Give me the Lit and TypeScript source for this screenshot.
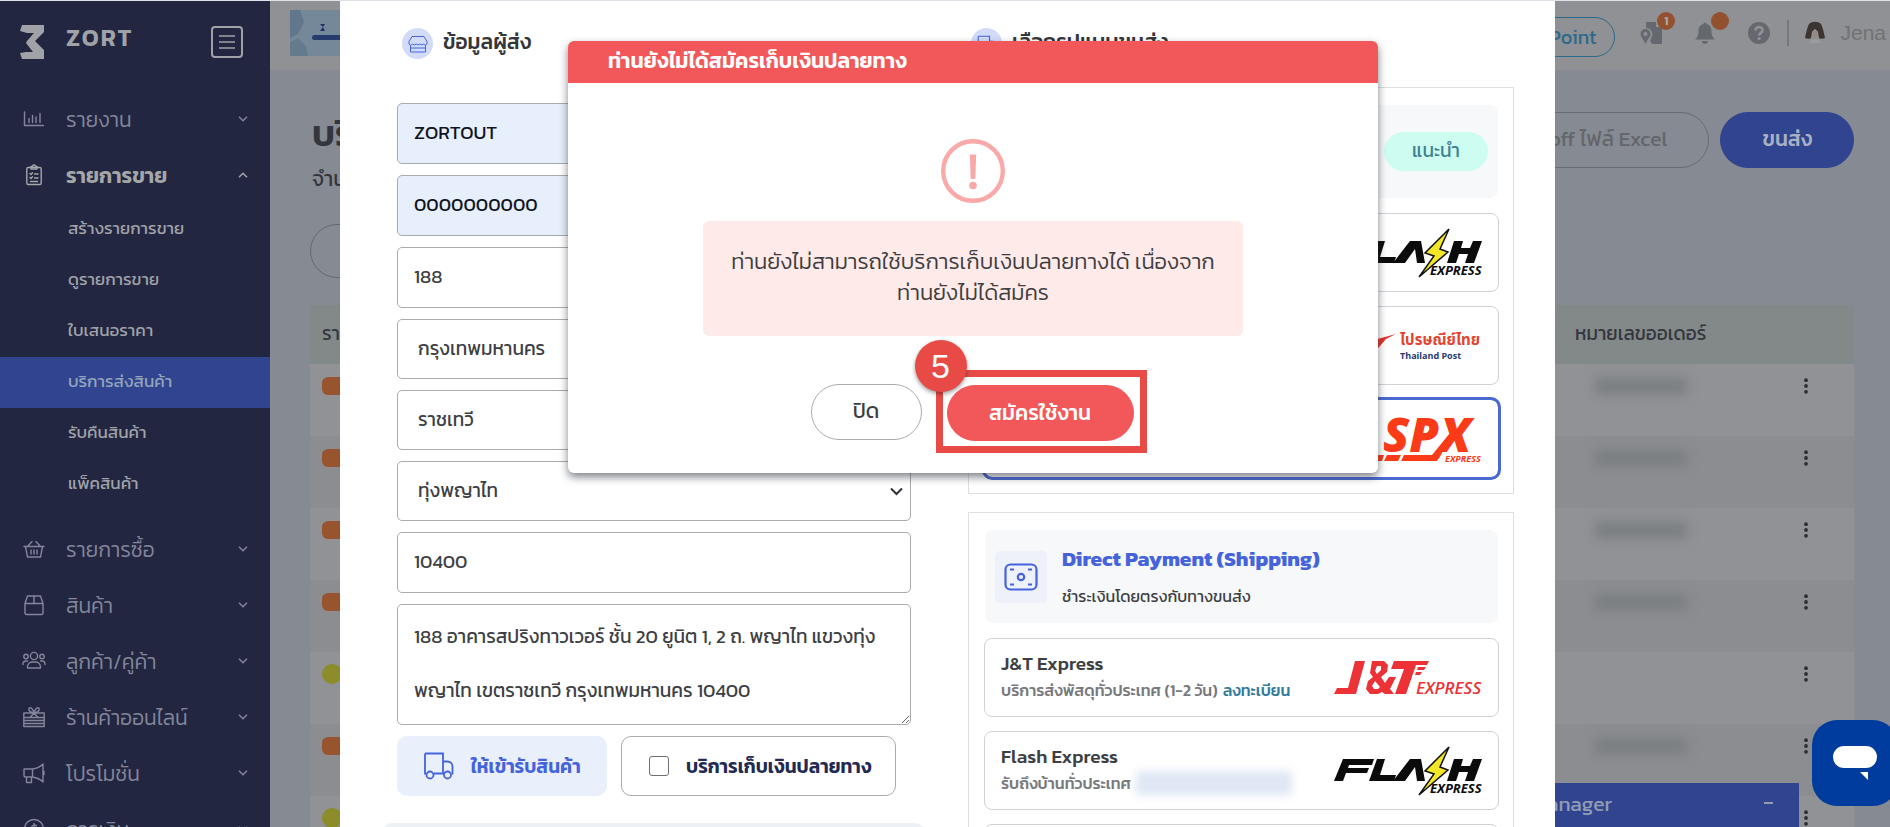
import { LitElement, html, css, svg, nothing } from "lit";
import { customElement } from "lit/decorators.js";
import { classMap } from "lit/directives/class-map.js";

const chevron = (up = false) => svg`<svg class="chev" width="10" height="6" viewBox="0 0 10 6" fill="none" stroke="currentColor" stroke-width="1.5"><path d=${up ? "M1 5.2 5 1.2 9 5.2" : "M1 .8 5 4.8 9 .8"} /></svg>`;

const stroke = (body: unknown) => html`<svg class="ico" width="24" height="24" viewBox="0 0 24 24" fill="none" stroke="currentColor" stroke-width="1.4" stroke-linecap="round" stroke-linejoin="round">${body}</svg>`;

const icons: Record<string, unknown> = {
  report: svg`<path d="M2.500 5v13.500H21.500M7 15.500v-4M10.500 15.500V8.500M14 15.500v-5.500M18 15.500V6.500" />`,
  orders: svg`<rect x="4.800" y="4.500" width="14.400" height="17" rx="1.500"/><path d="M9 4.500V3.500h1.500a1.500 1.500 0 0 1 3 0H15v2.500H9zM8 10.500l1 1 1.500-1.800M12.500 11H16M8 14.500l1 1 1.500-1.800M12.500 15H16M8.500 18.500h7" />`,
  buy: svg`<path d="M2 9.500h20M3.500 9.500l2 10.500h13l2-10.500M10 4.500 5.500 9.500M14 4.500l4.500 5M9 13v4M12 13v4M15 13v4" />`,
  product: svg`<path d="M3 10.500 5.500 3h13L21 10.500v9.500a1.500 1.500 0 0 1-1.500 1.500h-15A1.500 1.500 0 0 1 3 20zM3 10.500h18M12 3v7.500" />`,
  people: svg`<circle cx="12" cy="7" r="3.600"/><circle cx="4" cy="7.500" r="2.200"/><circle cx="20" cy="7.500" r="2.200"/><path d="M5.500 19v-1.500a5 5 0 0 1 5-4.500h3a5 5 0 0 1 5 4.500V19zM1 15.500v-1a3 3 0 0 1 3-2.500h1.500M23 15.500v-1a3 3 0 0 0-3-2.500h-1.500" />`,
  shop: svg`<path d="M1.800 8h20.400v13.500H1.800zM1.800 12.500h20.400M1.800 15.500h20.400M1.800 18.500h20.400M12 8C8 7 6 5.500 7 3.500s4 0 5 4.500c1-4.500 4-6.500 5-4.500S16 7 12 8zM12 8l-4 4.500M12 8l4 4.500" />`,
  promo: svg`<path d="M2 8h8.500v8H3.500A1.500 1.500 0 0 1 2 14.500zM10.500 8C14 7.500 18 6 21 3v18c-3-3-7-4.500-10.500-5M4.500 16v5.500H9.500V16M22 10.500v3" />`,
  money: svg`<circle cx="12" cy="12" r="9.500"/><path d="M14.500 9C14 7.800 10 7.500 9.800 9.700c0 2.500 5 1.600 5 4.400-.2 2.300-4.500 2.200-5.300.4M12 6.500v11" />`,
};

const menu = [
  { icon: "report", label: "รายงาน" },
  {
    icon: "orders", label: "รายการขาย",
    items: ["สร้างรายการขาย", "ดูรายการขาย", "ใบเสนอราคา", "บริการส่งสินค้า", "รับคืนสินค้า", "แพ็คสินค้า"],
  },
  { icon: "buy", label: "รายการซื้อ" },
  { icon: "product", label: "สินค้า" },
  { icon: "people", label: "ลูกค้า/คู่ค้า" },
  { icon: "shop", label: "ร้านค้าออนไลน์" },
  { icon: "promo", label: "โปรโมชั่น" },
  { icon: "money", label: "การเงิน" },
];

const FONT = css`"Kanit", "Prompt", "Noto Sans Thai", "Noto Sans", sans-serif`;

const base = css`
  * { box-sizing: border-box; }
  button, input, select, textarea { font: inherit; color: inherit; margin: 0; }
  button { cursor: pointer; }
  a { color: inherit; text-decoration: none; }
  svg { flex: none; display: block; overflow: visible; }
`;

@customElement("side-menu")
class SideMenu extends LitElement {
  static styles = [base, css`
    :host { display: block; background: #222641; color: #8b8e9b; }
    .brand { display: flex; height: 90px; padding: 22px 27px 0 18px; color: #a0a2a7; }
    .name { flex: 1; margin-left: 20px; font-size: 24px; line-height: 30px; font-weight: 600; letter-spacing: 2px; }
    .toggle { width: 32px; height: 32px; margin-top: 3px; padding: 0; border: 2px solid currentColor; border-radius: 4px; background: none; display: grid; place-items: center; }
    .group { display: flex; align-items: center; width: 100%; height: 56px; padding: 0 22px 0 22px; border: 0; background: none; font-size: 21px; font-weight: 300; color: #83869a; text-align: left; }
    .group span { flex: 1; margin-left: 20px; }
    .open { font-weight: 600; color: #a5a6a8; }
    .subs { list-style: none; margin: 1px 0 11px; padding: 0; }
    .sub { display: flex; align-items: center; height: 51px; padding: 0 0 4px 68px; font-size: 17px; color: #a0a2a8; }
    .current { background: #30448f; color: #93a4bc; }
  `];
  render() {
    return html`
      <div class="brand">
        <svg width="28" height="38" viewBox="0 0 28 38" fill="#a0a2a7"><path d="M4 2h22v7l-9 9 9 9v9H4l-2-6 6-1h7L8 20l1-2 7-8H9L2 8z"/></svg>
        <span class="name">ZORT</span>
        <button class="toggle" aria-label="เมนู"><svg width="18" height="14" viewBox="0 0 18 14" stroke="currentColor" stroke-width="1.600"><path d="M1 1h16M1 7h16M1 13h16"/></svg></button>
      </div>
      <nav>
        ${menu.map((g) => html`
          <button class=${classMap({ group: true, open: !!g.items })}>${stroke(icons[g.icon])}<span>${g.label}</span>${chevron(!!g.items)}</button>
          ${g.items ? html`<ul class="subs">${g.items.map((t, i) => html`<li><a href="#" class=${classMap({ sub: true, current: i === 3 })}>${t}</a></li>`)}</ul>` : nothing}
        `)}
      </nav>`;
  }
}

@customElement("orders-page")
class OrdersPage extends LitElement {
  static styles = [base, css`
    :host { display: block; background: #868a93; color: #33363c; overflow: hidden; }
    .top { display: flex; align-items: center; height: 70px; padding: 0 4px 6px 20px; background: #8f9194; border-bottom: 1px solid #86898f; color: #65696f; }
    .banner { width: 90px; height: 46px; margin-right: auto; }
    .point { height: 40px; padding: 0 18px; border: 1px solid #2c6a8b; border-radius: 20px; background: none; color: #2c6a8b; font-size: 20px; margin-top: 8px; margin-right: 24px; }
    .tool { position: relative; width: 24px; height: 24px; padding: 0; border: 0; background: none; margin-right: 30px; }
    .help { margin-right: 16px; }
    .count { position: absolute; left: 18px; top: -9px; width: 18px; height: 18px; border-radius: 50%; background: #93512f; color: #b0a8a4; font-size: 12px; line-height: 18px; font-weight: 600; }
    .user { display: flex; align-items: center; gap: 15px; padding-left: 16px; border-left: 2px solid #75787c; height: 26px; font: 21px/26px "Liberation Sans", Arial, sans-serif; color: #707276; }
    .title { display: flex; height: 153px; padding: 41px 36px 0 42px; }
    h1 { margin: 0; font-size: 36px; line-height: 42px; font-weight: 600; }
    .sum { margin: 10px 0 0; font-size: 21px; line-height: 30px; }
    .acts { margin-left: auto; display: flex; gap: 11px; }
    .pill { height: 56px; padding: 0 41px 3px; border-radius: 28px; border: 1px solid #686b70; background: none; color: #63666b; font-size: 21px; white-space: nowrap; }
    .solid { background: #30448f; border-color: #30448f; color: #a9b0c6; font-weight: 500; }
    .search { width: 400px; height: 54px; margin: 0 0 27px 40px; padding: 0 24px; border: 1px solid #65686d; border-radius: 27px; background: none; display: block; }
    .wrap { margin: 0 36px 0 40px; }
    table { width: 100%; border-collapse: collapse; }
    th { height: 59px; background: #838989; text-align: left; font-size: 19px; font-weight: 400; padding: 0 12px 3px; }
    td { height: 72px; padding: 0 12px 28px; background: #909295; }
    tr:nth-child(even) td { background: #8b8d90; }
    .num { width: 219px; }
    .more { width: 72px; }
    .carrier { width: 36px; height: 18px; border-radius: 6px; background: #98532f; }
    .yellow { width: 20px; height: 20px; border-radius: 50%; background: #8c8c2a; }
    .smudge { width: 92px; height: 16px; margin-left: 20px; background: #7a7e80; filter: blur(6px); }
    .dots { border: 0; padding: 0 10px; background: none; display: block; }
  `];
  render() {
    return html`
      <header class="top">
        <svg class="banner" viewBox="0 0 90 46"><rect width="90" height="46" fill="#74889a"/><path d="M0 0h10l4 12-6 12-8 4z" fill="#61778b"/><path d="M0 46V32l8-4 8 8 2 10z" fill="#647b8e"/><path d="M30 14h5l-2 3 2 4h-5l3-4z" fill="#22306a"/><rect x="22" y="25" width="60" height="5" rx="2.500" fill="#263c6e"/></svg>
        <button class="point">Point</button>
        <button class="tool" aria-label="ขนส่ง"><svg width="24" height="24" viewBox="0 0 24 24" fill="currentColor"><path d="M7 1h10v5h6v17H13l-2-3 2-5a6 6 0 0 0-6-8z"/><path fill-rule="evenodd" d="M6.500 8a5 5 0 0 1 5 5c0 3-3 5-5 10-2-5-5-7-5-10a5 5 0 0 1 5-5zm0 3a2 2 0 1 0 0 4 2 2 0 0 0 0-4z"/></svg><span class="count">1</span></button>
        <button class="tool" aria-label="แจ้งเตือน"><svg width="24" height="24" viewBox="0 0 24 24" fill="currentColor"><path d="M12 1.500c1 0 1.500.8 1.500 1.500 3.500.8 5 3.500 5 7 0 4 1 6.500 3.500 8.500H2c2.500-2 3.500-4.500 3.500-8.500 0-3.500 1.500-6.200 5-7 0-.7.5-1.500 1.500-1.500zM9 20h6c0 4-6 4-6 0z"/></svg><span class="count"></span></button>
        <button class="tool help" aria-label="ช่วยเหลือ"><svg width="24" height="24" viewBox="0 0 24 24"><circle cx="12" cy="12" r="11" fill="currentColor"/><path d="M8.500 9.500c0-5 7.500-4.500 7 0-.3 2.500-3.300 2.300-3.300 5" fill="none" stroke="#8f9194" stroke-width="2.600"/><circle cx="12.200" cy="17.500" r="1.600" fill="#8f9194"/></svg></button>
        <div class="user"><svg width="20" height="24" viewBox="0 0 20 24"><path d="M4 3c3-3 9-3 12 0 2 4 3 9 4 14-2 1-5 1-6 0l-1-6-3-3-3 3-1 6c-1 1-4 1-6 0C1 12 2 7 4 3z" fill="#3c3431"/><path d="M7 11l3-3 3 3v4l-3 3-3-3z" fill="#978a86"/><path d="M4 22c1-5 11-5 12 0z" fill="#9b9c9e"/></svg>Jena</div>
      </header>
      <div class="title">
        <div><h1>บริการส่งสินค้า</h1><p class="sum">จำนวน</p></div>
        <div class="acts"><button class="pill">off ไฟล์ Excel</button><button class="pill solid">ขนส่ง</button></div>
      </div>
      <input class="search" type="search" aria-label="ค้นหา" />
      <div class="wrap"><table>
        <thead><tr><th>รายการ</th><th class="num">หมายเลขออเดอร์</th><th class="more"></th></tr></thead>
        <tbody>${[0, 1, 2, 3, 4, 5, 6].map((i) => html`<tr>
          <td><div class=${classMap({ carrier: true, yellow: i === 4 || i === 6 })}></div></td>
          <td>${i === 4 ? nothing : html`<div class="smudge"></div>`}</td>
          <td><button class="dots" aria-label="เพิ่มเติม"><svg width="4" height="16" viewBox="0 0 4 16" fill="#2c2e33"><circle cx="2" cy="2.200" r="1.900"/><circle cx="2" cy="8" r="1.900"/><circle cx="2" cy="13.800" r="1.900"/></svg></button></td>
        </tr>`)}</tbody>
      </table></div>`;
  }
}

const flashLogo = html`<svg width="148" height="50" viewBox="0 0 148 50">
  <g fill="#0b0b0b"><path d="M9 13h31l-2 6H15l-1 3h21l-2 5H12l-3 8H0z"/><path d="M43 13h8l-5 16h16l-2 6H35z"/><path fill-rule="evenodd" d="M59 35 76 13h11l4 22h-8l-2-14-10 14z"/><path d="M120 13h9l-2 7h9l3-7h9l-8 22h-9l3-9h-9l-3 9h-9z"/></g>
  <path d="M115 1 91 25l9 3-15 21 29-25-8-3z" fill="#f2e627" stroke="#111" stroke-width="1.500"/>
  <text x="96" y="47" font-family="Open Sans, sans-serif" font-weight="700" font-style="italic" font-size="13" fill="#0b0b0b">EXPRESS</text></svg>`;

const jtLogo = html`<svg width="148" height="36" viewBox="0 0 148 36"><g fill="#ec3237">
  <path d="M21 1h10L22 34H0l3-6h11z"/>
  <path fill-rule="evenodd" d="M38 1h12l4 4-1 7-6 5 4 6 4-6h7l-6 12 4 5h-9l-3-2-4 2H36l-4-5 2-8 5-4-3-4zm5 5-2 5 2 3 4-4v-4zm-2 15-3 5 2 3h4l2-2z"/>
  <path d="M60 1h35l-2 4H82l-10 29H61L70 9H57z"/><path d="M84 7h8l-2 3h-7zM82 12h6l-2 3h-5z"/></g>
  <text x="82" y="34" font-family="Open Sans, sans-serif" font-weight="600" font-style="italic" font-size="17" fill="#ec3237">EXPRESS</text></svg>`;

const spxLogo = html`<svg width="112" height="46" viewBox="0 0 112 46" fill="#fb3a17">
  <text x="13" y="36" font-family="Open Sans, sans-serif" font-weight="800" font-style="italic" font-size="48">SPX</text>
  <path d="M0 39h14l-2 6H0zM17 39h14l-3 6H14zM34 39h28l18-22-9 22-4 6H31z"/>
  <text x="75" y="46" font-family="Open Sans, sans-serif" font-weight="700" font-style="italic" font-size="9">EXPRESS</text></svg>`;

const postLogo = html`<svg width="112" height="34" viewBox="0 0 112 34"><path d="M0 12 26 5 16 10 4 24z" fill="#e5342c"/><text x="30" y="16" font-family="Noto Sans Thai, Noto Sans, sans-serif" font-weight="700" font-size="15" fill="#e2432f">ไปรษณีย์ไทย</text><text x="30" y="30" font-family="Open Sans, sans-serif" font-weight="700" font-size="9" fill="#263a73">Thailand Post</text></svg>`;

const truck = svg`<path d="M2 2.500h18v20H11M3 22.500H2V2.500M20 10.500h4.500a5 5 0 0 1 5 5v7h-1M21 22.500h-1"/><circle cx="7" cy="24" r="3.500"/><circle cx="24.500" cy="24" r="3.500"/>`;

@customElement("shipping-panel")
class ShippingPanel extends LitElement {
  static styles = [base, css`
    :host { display: grid; grid-template-columns: minmax(0, 1fr) minmax(0, 546px); column-gap: 57px; align-items: start; padding: 27px 41px 0 57px; background: #fff; color: #3d3f44; overflow: hidden; }
    .head { display: flex; align-items: center; height: 31px; margin: 0; font-size: 21px; line-height: 28px; font-weight: 500; gap: 10px; color: #33363b; padding-left: 5px; }
    .head b { font-weight: 500; padding-bottom: 4px; }
    .disc { width: 31px; height: 31px; border-radius: 50%; background: #d2dcfa; display: grid; place-items: center; }
    .form { display: flex; flex-direction: column; gap: 11px; margin-top: 44px; font-size: 19px; }
    .box { width: 100%; height: 61px; padding: 0 16px 2px; border: 1px solid #a9abb0; border-radius: 5px; background: #fff; display: block; }
    .filled { background: #e8effc; color: #101522; }
    select.box { height: 60px; padding: 0 20px 2px; appearance: none; }
    .pick { position: relative; }
    .pick svg { position: absolute; right: 8px; top: 26px; pointer-events: none; }
    textarea.box { height: 121px; padding: 5px 16px; line-height: 54px; resize: vertical; }
    .opts { display: flex; gap: 14px; font-weight: 600; }
    .pickup { display: flex; align-items: center; gap: 16px; width: 210px; height: 60px; padding: 0 0 0 26px; border: 0; border-radius: 10px; background: #eaeffc; color: #4463dc; white-space: nowrap; }
    .cod { display: flex; align-items: center; gap: 17px; width: 275px; height: 60px; padding-left: 27px; border: 1px solid #a9abb0; border-radius: 10px; color: #232a52; white-space: nowrap; }
    .cod input { appearance: none; width: 20px; height: 20px; border: 1px solid #6e7075; border-radius: 3px; background: #fff; }
    .next { height: 60px; margin: 16px -14px 0 -15px; border-radius: 10px; background: #edf0f5; }
    .right { display: flex; flex-direction: column; gap: 18px; }
    .right .head { padding-left: 3px; margin-bottom: 10px; }
    .group { border: 1px solid #dddfe3; padding: 17px 14px 15px 15px; display: flex; flex-direction: column; gap: 14px; }
    .ghead { display: flex; align-items: center; height: 93px; margin: 0 1px 1px; padding: 0 10px; border-radius: 8px; background: #f7f8fa; gap: 15px; }
    .tile { width: 52px; height: 52px; border-radius: 5px; background: #eef1fa; display: grid; place-items: center; }
    h3 { margin: 0; font-size: 21px; line-height: 28px; font-weight: 700; color: #4463dc; }
    .desc { margin: 10px 0 0; font-size: 16px; line-height: 26px; }
    .rec { margin-left: auto; width: 104px; height: 39px; border-radius: 20px; background: #ccfdf0; color: #40808f; font-size: 19px; line-height: 37px; text-align: center; }
    .card { display: flex; align-items: center; justify-content: space-between; height: 79px; padding: 0 16px; border: 1px solid #cfd2d6; border-radius: 8px; background: #fff; }
    .chosen { outline: 3px solid #4a69d2; outline-offset: -1px; border-color: #4a69d2; }
    .cname { font-size: 19px; line-height: 26px; font-weight: 500; }
    .cdesc { display: flex; align-items: center; gap: 5px; font-size: 16px; line-height: 26px; padding-bottom: 2px; color: #77797d; font-weight: 500; white-space: nowrap; }
    .cdesc a { color: #337b9c; }
    .hid { width: 156px; height: 24px; background: #dfe7f5; filter: blur(4px); }
  `];
  private field(id: string, label: string, value: string, filled = false) {
    return html`<input id=${id} class=${classMap({ box: true, filled })} aria-label=${label} .value=${value} />`;
  }
  private pick(label: string, value: string) {
    return html`<div class="pick"><select class="box" aria-label=${label}><option>${value}</option></select><svg width="13" height="9" viewBox="0 0 13 9" fill="none" stroke="#2f3136" stroke-width="2"><path d="M1 1.500 6.500 7 12 1.500"/></svg></div>`;
  }
  render() {
    return html`
      <section>
        <h2 class="head"><span class="disc"><svg width="20" height="20" viewBox="0 0 20 20" fill="none" stroke="#4463dc" stroke-width="1"><path d="M4 2.500h12l3 5v2.500a2 2 0 0 1-3.600 0 2.500 2.500 0 0 1-3.600 0 2.500 2.500 0 0 1-3.600 0 2.500 2.500 0 0 1-3.600 0A2 2 0 0 1 1 10V7.500zM2.500 11.500V18h15v-6.500M2.500 14h15"/></svg></span><b>ข้อมูลผู้ส่ง</b></h2>
        <div class="form">
          ${this.field("name", "ชื่อผู้ส่ง", "ZORTOUT", true)}
          ${this.field("phone", "เบอร์โทรศัพท์", "0000000000", true)}
          ${this.field("street", "ที่อยู่", "188")}
          ${this.pick("จังหวัด", "กรุงเทพมหานคร")}
          ${this.pick("เขต/อำเภอ", "ราชเทวี")}
          ${this.pick("แขวง/ตำบล", "ทุ่งพญาไท")}
          ${this.field("zip", "รหัสไปรษณีย์", "10400")}
          <textarea class="box" aria-label="ที่อยู่เต็ม" .value=${"188 อาคารสปริงทาวเวอร์ ชั้น 20 ยูนิต 1, 2 ถ. พญาไท แขวงทุ่งพญาไท เขตราชเทวี กรุงเทพมหานคร 10400"}></textarea>
          <div class="opts">
            <button class="pickup"><svg width="32" height="30" viewBox="0 0 32 30" fill="none" stroke="currentColor" stroke-width="1.800">${truck}</svg>ให้เข้ารับสินค้า</button>
            <label class="cod"><input type="checkbox" />บริการเก็บเงินปลายทาง</label>
          </div>
          <div class="next"></div>
        </div>
      </section>
      <section class="right">
        <h2 class="head"><span class="disc"><svg width="20" height="20" viewBox="0 0 32 30" fill="none" stroke="#4463dc" stroke-width="1.800">${truck}</svg></span><b>เลือกรูปแบบขนส่ง</b></h2>
        <div class="group">
          <div class="ghead"><span class="rec">แนะนำ</span></div>
          <div class="card"><span></span>${flashLogo}</div>
          <div class="card"><span></span>${postLogo}</div>
          <div class="card chosen"><span></span>${spxLogo}</div>
        </div>
        <div class="group">
          <div class="ghead">
            <span class="tile"><svg width="34" height="28" viewBox="0 0 34 28" fill="none" stroke="#4463dc" stroke-width="2.200"><rect x="1.500" y="1.500" width="31" height="25" rx="5"/><circle cx="17" cy="14" r="3.200"/><path d="M6 6.500h4M24 6.500h4M6 21.500h4M24 21.500h4"/></svg></span>
            <div><h3>Direct Payment (Shipping)</h3><p class="desc">ชำระเงินโดยตรงกับทางขนส่ง</p></div>
          </div>
          <div class="card"><div><div class="cname">J&amp;T Express</div><div class="cdesc">บริการส่งพัสดุทั่วประเทศ (1-2 วัน) <a href="#">ลงทะเบียน</a></div></div>${jtLogo}</div>
          <div class="card"><div><div class="cname">Flash Express</div><div class="cdesc">รับถึงบ้านทั่วประเทศ <span class="hid"></span></div></div>${flashLogo}</div>
          <div class="card"></div>
        </div>
      </section>`;
  }
}

@customElement("cod-dialog")
class CodDialog extends LitElement {
  static styles = [base, css`
    :host { display: block; background: #fff; border-radius: 6px; overflow: hidden; box-shadow: 0 4px 9px rgba(40, 45, 55, 0.6); color: #3d3d40; }
    h2 { margin: 0; height: 42px; padding: 0 40px; line-height: 40px; background: #f25859; color: #fff; font-size: 21px; font-weight: 600; }
    .body { display: flex; flex-direction: column; align-items: center; height: 390px; padding-top: 56px; }
    .msg { width: 540px; height: 115px; margin: 18px 0 34px; padding: 25px 20px; border-radius: 6px; background: #ffeaea; font-size: 22px; font-weight: 300; line-height: 31px; text-align: center; }
    .row { display: flex; align-items: center; gap: 14px; margin-left: 11px; }
    .btn { height: 56px; padding: 0 0 2px; border-radius: 28px; border: 1px solid #a9abb0; background: #fff; font-size: 21px; }
    .close { width: 111px; }
    .mark { position: relative; border: 7px solid #e84b46; padding: 8px 6px 5px 4px; }
    .go { width: 187px; border-color: #f25859; background: #f25859; color: #fff; font-weight: 500; display: block; }
    .step { position: absolute; left: -28px; top: -37px; width: 52px; height: 52px; border-radius: 50%; background: #e84b46; color: #fff; font: 34px/52px "Liberation Sans", Arial, sans-serif; text-align: center; box-shadow: 0 2px 4px rgba(0, 0, 0, 0.4); }
  `];
  render() {
    return html`
      <h2>ท่านยังไม่ได้สมัครเก็บเงินปลายทาง</h2>
      <div class="body">
        <svg width="64" height="64" viewBox="0 0 64 64"><circle cx="32" cy="32" r="29.800" fill="none" stroke="#f9a9a8" stroke-width="4.400"/><path d="M28.800 15.500h6.400L34.300 40h-4.600z" fill="#f9a9a8"/><circle cx="32" cy="46.500" r="3.800" fill="#f9a9a8"/></svg>
        <div class="msg">ท่านยังไม่สามารถใช้บริการเก็บเงินปลายทางได้ เนื่องจาก<br />ท่านยังไม่ได้สมัคร</div>
        <div class="row">
          <button class="btn close">ปิด</button>
          <div class="mark"><button class="btn go">สมัครใช้งาน</button><span class="step">5</span></div>
        </div>
      </div>`;
  }
}

@customElement("app-root")
class AppRoot extends LitElement {
  static styles = [base, css`
    :host { display: grid; grid-template-columns: 270px minmax(0, 1fr); position: relative; height: 100vh; overflow: hidden; font-family: ${FONT}; border-top: 1px solid #dde1e8; box-sizing: border-box; }
    side-menu, orders-page { min-height: 0; overflow: hidden; }
    .manager { position: absolute; right: 91px; bottom: 0; width: 320px; height: 44px; padding: 0 26px 4px 0; display: flex; align-items: center; background: #30448f; color: #929cb5; font-size: 21px; }
    .manager span { flex: 1; text-align: right; padding-right: 152px; }
    .modal { position: absolute; inset: 0; display: grid; grid-template-columns: minmax(0, 1fr); padding: 0 335px 0 340px; }
    shipping-panel { min-height: 0; }
    .over { position: absolute; inset: 40px 0 auto; display: flex; justify-content: center; padding-left: 56px; }
    cod-dialog { width: 810px; }
    .chat { position: absolute; right: -8px; bottom: 21px; width: 86px; height: 86px; border: 0; padding: 0; border-radius: 25px; background: #003b9e; display: grid; place-items: center; }
  `];
  render() {
    return html`
      <side-menu></side-menu>
      <orders-page></orders-page>
      <div class="manager"><span>Manager</span><svg width="9" height="2"><rect width="9" height="2" fill="#929cb5"/></svg></div>
      <div class="modal"><shipping-panel></shipping-panel></div>
      <div class="over"><cod-dialog></cod-dialog></div>
      <button class="chat" aria-label="แชท"><svg width="44" height="36" viewBox="0 0 44 36" fill="#fff"><rect y="1" width="44" height="22" rx="11"/><path d="M27 27h8v8z"/></svg></button>`;
  }
}
